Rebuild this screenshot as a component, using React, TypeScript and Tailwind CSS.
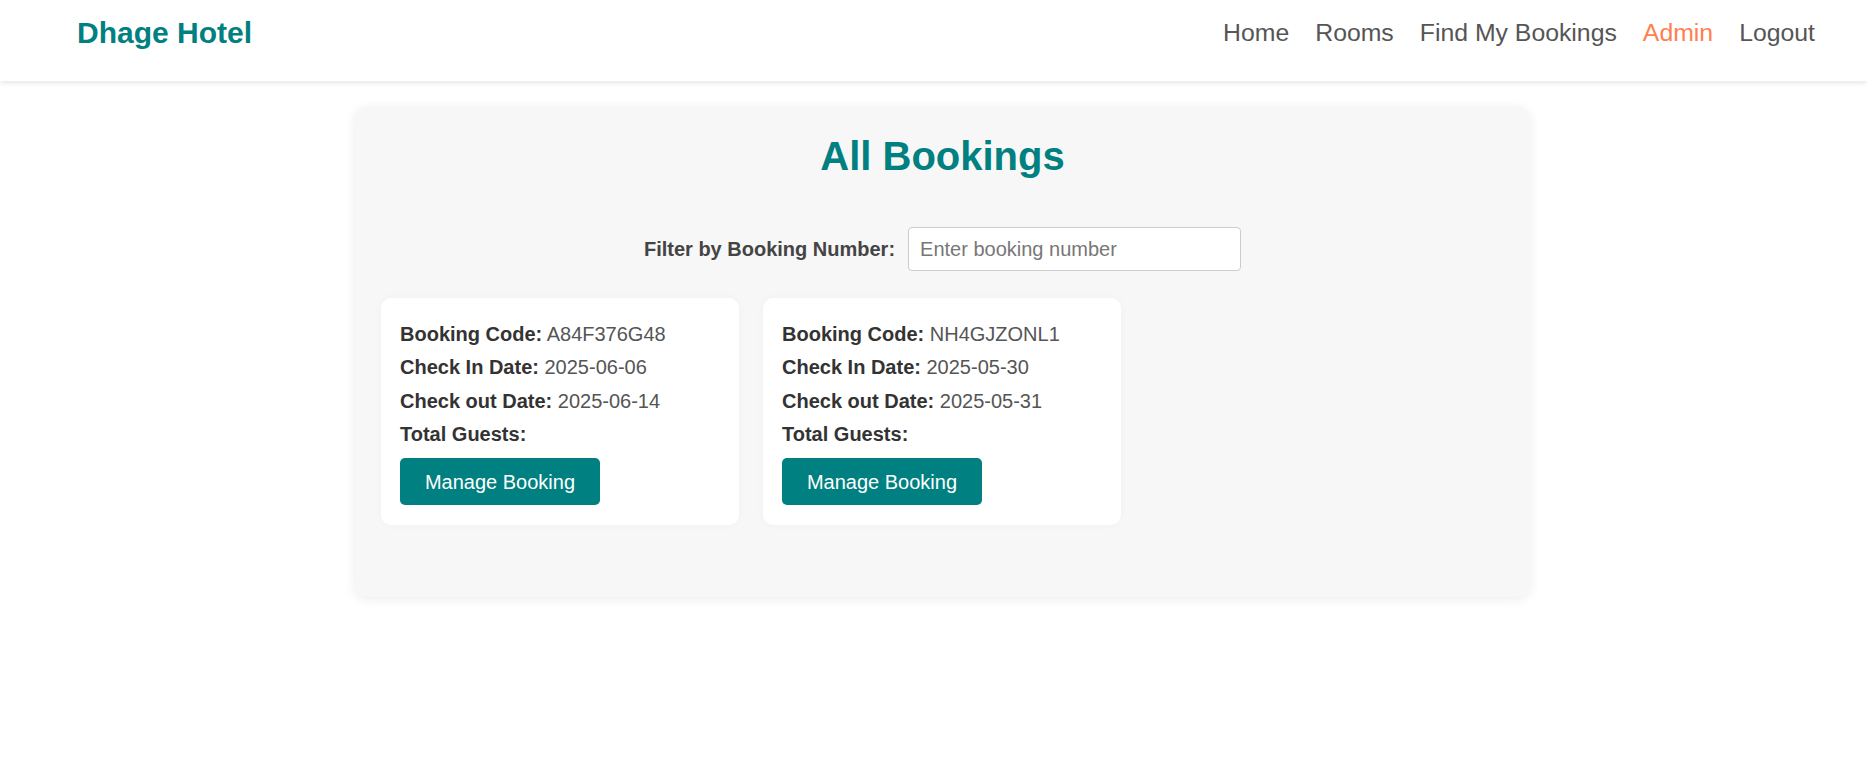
import { useState } from 'react';

interface Booking {
  code: string;
  checkIn: string;
  checkOut: string;
  guests: string;
}

const BOOKINGS: Booking[] = [
  { code: 'A84F376G48', checkIn: '2025-06-06', checkOut: '2025-06-14', guests: '' },
  { code: 'NH4GJZONL1', checkIn: '2025-05-30', checkOut: '2025-05-31', guests: '' },
];

const NAV = ['Home', 'Rooms', 'Find My Bookings', 'Admin', 'Logout'];

function Navbar() {
  return (
    <header className="h-[81px] bg-white flex items-start justify-between pl-[77px] pr-[52px] pt-[16px] shadow-[0_2px_5px_rgba(0,0,0,0.1)] relative z-10">
      <div className="text-[30px] font-bold text-[#008080] leading-[34px]">Dhage Hotel</div>
      <nav className="flex items-center gap-[26px] text-[24.8px] leading-[34px]">
        {NAV.map(item => (
          <a
            key={item}
            href="#"
            className={item === 'Admin' ? 'text-[#ff7f50]' : 'text-[#555]'}
          >
            {item}
          </a>
        ))}
      </nav>
    </header>
  );
}

function BookingCard({ b }: { b: Booking }) {
  return (
    <div className="w-[358px] bg-white rounded-[10px] px-[19px] pt-[20px] pb-[20px] shadow-[0_0_8px_rgba(0,0,0,0.03)]">
      <div className="text-[20px] leading-[33.3px] text-[#555]">
        <p><span className="font-bold text-[#333]">Booking Code:</span> {b.code}</p>
        <p><span className="font-bold text-[#333]">Check In Date:</span> {b.checkIn}</p>
        <p><span className="font-bold text-[#333]">Check out Date:</span> {b.checkOut}</p>
        <p><span className="font-bold text-[#333]">Total Guests:</span> {b.guests}</p>
      </div>
      <button className="mt-[7px] w-[200px] h-[47px] bg-[#008080] text-white text-[20px] rounded-[5px]">
        Manage Booking
      </button>
    </div>
  );
}

export default function App() {
  const [filter, setFilter] = useState('');
  const shown = BOOKINGS.filter(b => b.code.toLowerCase().includes(filter.toLowerCase()));

  return (
    <div className="min-h-[782px] bg-white font-['Liberation_Sans',Arial,sans-serif]">
      <Navbar />
      <main className="pt-[26px] flex justify-center">
        <div className="w-[1175px] ml-[18px] bg-[#f7f7f7] rounded-[12px] shadow-[0_2px_12px_rgba(0,0,0,0.08)] px-[26px] pt-[21px] pb-[72px]">
          <h2 className="text-center text-[40px] font-bold text-[#008080] leading-[56px]">All Bookings</h2>
          <div className="mt-[43px] flex items-center justify-center gap-[13px]">
            <label className="text-[20px] font-bold text-[#444]">Filter by Booking Number:</label>
            <input
              value={filter}
              onChange={e => setFilter(e.target.value)}
              placeholder="Enter booking number"
              className="w-[333px] h-[44px] bg-white border border-[#ccc] rounded-[4px] px-[11px] text-[20px] text-[#333] placeholder:text-[#777] outline-none"
            />
          </div>
          <div className="mt-[27px] flex gap-[24px]">
            {shown.map(b => <BookingCard key={b.code} b={b} />)}
          </div>
        </div>
      </main>
    </div>
  );
}
